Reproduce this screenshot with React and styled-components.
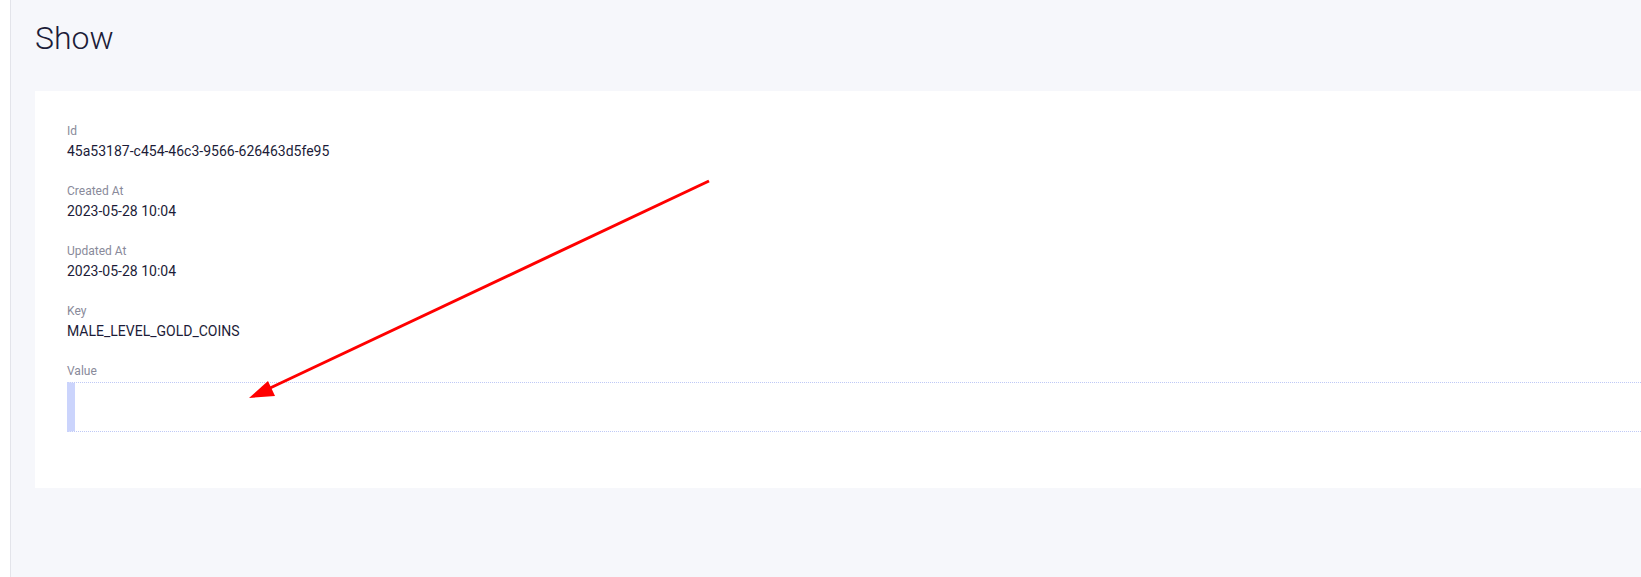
import React from "react";
import styled, { createGlobalStyle } from "styled-components";

const GlobalStyle = createGlobalStyle`
  html, body {
    margin: 0;
    padding: 0;
    background: #ffffff;
    font-family: Roboto, "Liberation Sans", sans-serif;
    overflow: hidden;
  }
`;

const Layout = styled.div`
  display: flex;
  width: 100%;
  height: 577px;
  position: relative;
`;

const SideStrip = styled.div`
  flex: 0 0 10px;
  background: #ffffff;
  border-right: 1px solid #e3e4ea;
`;

const Main = styled.main`
  flex: 1;
  min-width: 0;
  background: #f6f7fb;
  padding: 18px 0 0 24px;
`;

const Title = styled.h2`
  margin: 0 0 33px;
  font-size: 32px;
  line-height: 40px;
  font-weight: 300;
  color: #1c1c38;
`;

const Card = styled.section`
  background: #ffffff;
  padding: 32px 0 32px 32px;
  margin-right: -40px;
`;

const Field = styled.div`
  margin-bottom: 24px;
`;

const Label = styled.div`
  font-size: 12px;
  line-height: 16px;
  color: #898a9a;
  margin-bottom: ${({ $tight }) => ($tight ? "3px" : "4px")};
`;

const Value = styled.div`
  font-size: 14px;
  line-height: 16px;
  color: #1c1c38;
`;

const Quote = styled.div`
  height: 48px;
  border-left: 8px solid #cbd4fc;
  border-top: 1px dotted #bfc9f6;
  border-bottom: 1px dotted #bfc9f6;
`;

const Annotation = styled.svg`
  position: absolute;
  left: 0;
  top: 0;
  pointer-events: none;
`;

const fields = [
  { label: "Id", value: "45a53187-c454-46c3-9566-626463d5fe95" },
  { label: "Created At", value: "2023-05-28 10:04" },
  { label: "Updated At", value: "2023-05-28 10:04" },
  { label: "Key", value: "MALE_LEVEL_GOLD_COINS" },
];

const App = () => (
  <>
    <GlobalStyle />
    <Layout>
      <SideStrip />
      <Main>
        <Title>Show</Title>
        <Card>
          {fields.map((f) => (
            <Field key={f.label}>
              <Label>{f.label}</Label>
              <Value>{f.value}</Value>
            </Field>
          ))}
          <Field>
            <Label $tight>Value</Label>
            <Quote />
          </Field>
        </Card>
      </Main>
      <Annotation width="1641" height="577">
        <line x1="709" y1="181" x2="268" y2="389" stroke="#ff0000" strokeWidth="3" />
        <polygon points="249,398 268,381 275,396" fill="#ff0000" />
      </Annotation>
    </Layout>
  </>
);

export default App;
